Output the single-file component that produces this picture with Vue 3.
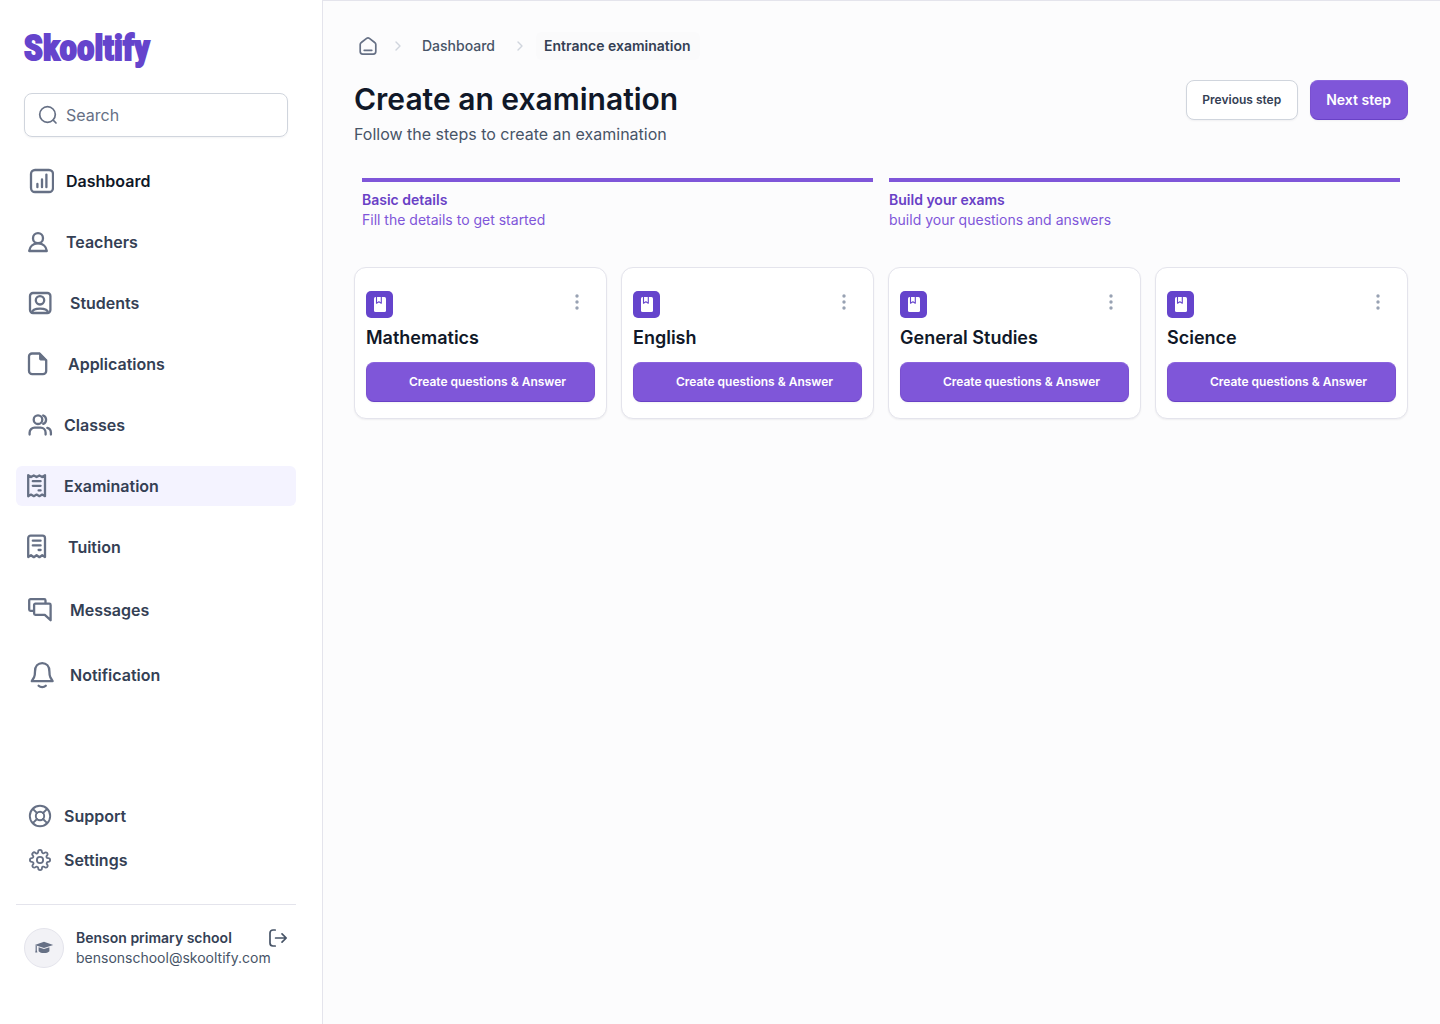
<script setup>
import { ref } from 'vue'

const query = ref('')

const mainNav = [
  { label: 'Dashboard', icon: 'dashboard', gap: 'gap-s', strong: true },
  { label: 'Teachers', icon: 'teachers', gap: 'gap-s' },
  { label: 'Students', icon: 'students', gap: 'gap-l' },
  { label: 'Applications', icon: 'applications', gap: 'gap-m' },
  { label: 'Classes', icon: 'classes', gap: 'gap-xs' },
  { label: 'Examination', icon: 'examination', gap: 'gap-xs', active: true },
  { label: 'Tuition', icon: 'tuition', gap: 'gap-m' }
]

const inboxNav = [
  { label: 'Messages', icon: 'messages', gap: 'gap-l' },
  { label: 'Notification', icon: 'notification', gap: 'gap-l' }
]

const helpNav = [
  { label: 'Support', icon: 'support', gap: 'gap-xs' },
  { label: 'Settings', icon: 'settings', gap: 'gap-xs' }
]

const navGroups = [
  { name: 'Main', cls: 'nav-main', items: mainNav },
  { name: 'Inbox', cls: 'nav-inbox', items: inboxNav },
  { name: 'Help', cls: 'nav-help', items: helpNav }
]

const icons = {
  dashboard:
    '<rect x="5" y="3" width="22" height="22" rx="4"/><path d="M11.4 17v3.2M16 12.4v7.800M20.4 7.600v12.600"/>',
  teachers:
    '<circle cx="12" cy="10.2" r="5"/><path d="M3.2 23c.5-4.4 3.8-7.6 8.8-7.6s8.300 3.200 8.800 7.600z"/>',
  students:
    '<rect x="4" y="4" width="20.400" height="20" rx="3"/><circle cx="14" cy="11.300" r="4.200"/><path d="M6 23.600c.3-2.800 3-4 8-4s7.700 1.200 8 4"/>',
  applications:
    '<path d="M6 3.500h7.600L20.200 10.300V21a3.200 3.200 0 0 1-3.200 3.200H6.200A3.200 3.200 0 0 1 3 21V6.500a3 3 0 0 1 3-3z"/><path d="M13.600 3.800v5.200a1 1 0 0 0 1 1h5.400z" fill="currentColor" stroke-width="1"/>',
  classes:
    '<circle cx="12" cy="8.700" r="4.300"/><path d="M17.200 4.500a4.500 4.500 0 0 1 0 8.400M3.600 23.500v-1.800a5 5 0 0 1 5-5h6a5 5 0 0 1 5 5v1.800M21.300 16.900a5 5 0 0 1 3.600 4.800v1.800"/>',
  examination:
    '<path d="M2.200 3.200 5 5l2.800-1.600L10.600 5l2.800-1.600L16.200 5 19 3.200v21l-2.800-1.600-2.800 1.600-2.800-1.600-2.800 1.600L5 22.600l-2.800 1.600z"/><path d="M6.800 9.200h7.800M6.800 13.800h7.800M12.600 18.400h2"/>',
  tuition:
    '<path d="M2.200 24V5.200a2.500 2.500 0 0 1 2.500-2.500h11.800A2.500 2.500 0 0 1 19 5.200V24l-2.800-1.800-2.800 2-2.800-2-2.800 2-2.800-2z"/><path d="M6.800 7.700h7.800M6.800 12.400h7.800M12.600 17h2"/>',
  messages:
    '<path d="M7.600 14.900H4.500a1.300 1.300 0 0 1-1.300-1.300V4.500a1.300 1.300 0 0 1 1.300-1.300h13.700a1.300 1.300 0 0 1 1.300 1.300v2.600"/><path d="M24.600 24.200V9a1.300 1.300 0 0 0-1.300-1.300H9.400A1.300 1.300 0 0 0 8.100 9v8.600a1.300 1.300 0 0 0 1.300 1.300h9.400z"/>',
  notification:
    '<path d="M5.800 20.200h20.800l-2.200-3.800c-.8-1.500-1-3-1-6 0-5-3-8.300-7.200-8.300s-7.200 3.300-7.200 8.300c0 3-.2 4.500-1 6z"/><path d="M12.600 24.800c1 1 2.200 1.400 3.600 1.400s2.600-.4 3.600-1.400"/>',
  support:
    '<g stroke-width="1.9"><circle cx="14" cy="14" r="10.200"/><circle cx="14" cy="14" r="4.200"/><path d="m6.800 6.800 4.200 4.200m6 6 4.200 4.200m0-14.400L17 11m-6 6-4.200 4.200"/></g>',
  settings:
    '<g transform="translate(3 3) scale(.917)" stroke-width="2"><circle cx="12" cy="12" r="3.400"/><path d="M19.400 15a1.650 1.650 0 0 0 .33 1.820l.06.06a2 2 0 1 1-2.830 2.830l-.06-.06a1.650 1.650 0 0 0-2.800 1.170V21a2 2 0 0 1-4 0v-.09A1.650 1.650 0 0 0 9 19.400a1.650 1.650 0 0 0-1.820.33l-.06.06a2 2 0 1 1-2.830-2.830l.06-.06A1.650 1.650 0 0 0 3.170 14H3a2 2 0 0 1 0-4h.09A1.650 1.650 0 0 0 4.600 9a1.650 1.650 0 0 0-.33-1.820l-.06-.06a2 2 0 1 1 2.830-2.830l.06.06A1.650 1.650 0 0 0 10 3.170V3a2 2 0 0 1 4 0v.09a1.650 1.650 0 0 0 2.800 1.170l.06-.06a2 2 0 1 1 2.830 2.830l-.06.06A1.650 1.650 0 0 0 20.910 10H21a2 2 0 0 1 0 4h-.09a1.650 1.650 0 0 0-1.510 1z"/></g>'
}

const steps = [
  { title: 'Basic details', text: 'Fill the details to get started' },
  { title: 'Build your exams', text: 'build your questions and answers' }
]

const subjects = ['Mathematics', 'English', 'General Studies', 'Science']
</script>

<template>
  <div class="app">
    <aside class="sidebar">
      <a class="logo" href="#">Skooltify</a>

      <label class="search">
        <svg width="20" height="20" viewBox="0 0 20 20" aria-hidden="true">
          <circle cx="9.500" cy="9.500" r="7.800" />
          <path d="m15.200 15.200 2.800 2.800" />
        </svg>
        <input v-model="query" type="search" placeholder="Search" aria-label="Search" />
      </label>

      <nav v-for="group in navGroups" :key="group.name" :class="group.cls" :aria-label="group.name">
        <a
          v-for="item in group.items"
          :key="item.label"
          href="#"
          class="nav-item"
          :class="[item.gap, { active: item.active, strong: item.strong }]"
        >
          <svg class="nav-icon" viewBox="0 0 28 28" aria-hidden="true" v-html="icons[item.icon]"></svg>
          <span>{{ item.label }}</span>
        </a>
      </nav>

      <div class="account">
        <span class="avatar">
          <svg width="20" height="14" viewBox="0 0 20 14" aria-hidden="true">
            <path d="M10 .8 19.200 3.900 10 7 .8 3.900z" />
            <path d="M4.600 6.300 10 8.100l5.400-1.800v3.900c-1.200 1.300-3 1.800-5.400 1.800s-4.200-.5-5.400-1.800z" />
            <path d="M1.600 4.400h1.200v4.800l.6 2.400H1.200l.4-2.400z" />
          </svg>
        </span>
        <span class="who">
          <strong>Benson primary school</strong>
          <span>bensonschool@skooltify.com</span>
        </span>
        <button class="logout" type="button" aria-label="Log out">
          <svg width="20" height="20" viewBox="0 0 20 20" aria-hidden="true">
            <path d="M7.200 2H5A3 3 0 0 0 2 5v10a3 3 0 0 0 3 3h2.200M7.600 10H18M14 5.800l4.200 4.200-4.200 4.200" />
          </svg>
        </button>
      </div>
    </aside>

    <main class="content">
      <nav class="crumbs" aria-label="Breadcrumb">
        <a class="home" href="#" aria-label="Home">
          <svg width="20" height="20" viewBox="0 0 20 20" aria-hidden="true">
            <path d="M6.200 14.300h7.600M2.200 8.600c0-.9.400-1.600 1.100-2.100l5.300-4.200a2.300 2.300 0 0 1 2.800 0l5.300 4.200c.7.500 1.100 1.200 1.100 2.100v7a2.500 2.500 0 0 1-2.500 2.500H4.700a2.500 2.500 0 0 1-2.500-2.500z" />
          </svg>
        </a>
        <svg class="chevron" width="16" height="16" viewBox="0 0 16 16" aria-hidden="true"><path d="m6 4 4 4-4 4" /></svg>
        <a class="crumb" href="#">Dashboard</a>
        <svg class="chevron" width="16" height="16" viewBox="0 0 16 16" aria-hidden="true"><path d="m6 4 4 4-4 4" /></svg>
        <a class="crumb current" href="#" aria-current="page">Entrance examination</a>
      </nav>

      <header class="head">
        <div>
          <h1>Create an examination</h1>
          <p>Follow the steps to create an examination</p>
        </div>
        <div class="actions">
          <button class="btn plain" type="button">Previous step</button>
          <button class="btn primary" type="button">Next step</button>
        </div>
      </header>

      <ol class="steps">
        <li v-for="step in steps" :key="step.title">
          <strong>{{ step.title }}</strong>
          <span>{{ step.text }}</span>
        </li>
      </ol>

      <section class="cards" aria-label="Subjects">
        <article v-for="subject in subjects" :key="subject" class="card">
          <div class="card-top">
            <span class="book">
              <svg width="12" height="15" viewBox="0 0 12 15" aria-hidden="true">
                <rect width="12" height="15" rx="1.500" fill="#fff" stroke="none" />
                <path d="M2.500 0v6.200l2.400-1.500 2.400 1.500V0" fill="#fff" stroke="#6544cc" stroke-width="1.100" />
              </svg>
            </span>
            <button class="more" type="button" :aria-label="subject + ' options'">
              <svg width="4" height="16" viewBox="0 0 4 16" aria-hidden="true">
                <circle cx="2" cy="2" r="1.700" /><circle cx="2" cy="8" r="1.700" /><circle cx="2" cy="14" r="1.700" />
              </svg>
            </button>
          </div>
          <h2>{{ subject }}</h2>
          <button class="btn primary create" type="button">Create questions &amp; Answer</button>
        </article>
      </section>
    </main>
  </div>
</template>

<style>
body {
  margin: 0;
  background: #fcfcfd;
}
</style>

<style scoped>
.app {
  display: flex;
  min-height: 100vh;
  font-family: Inter, 'Liberation Sans', sans-serif;
  color: #344054;
  font-size: 14px;
  line-height: 20px;
}
.app *,
.app {
  box-sizing: border-box;
}
a {
  color: inherit;
  text-decoration: none;
}
button {
  font: inherit;
  cursor: pointer;
}
svg {
  display: block;
  flex: none;
  fill: none;
  stroke: currentColor;
  stroke-linecap: round;
  stroke-linejoin: round;
}

.sidebar {
  flex: none;
  width: 322px;
  padding: 27px 26px 56px 16px;
  display: flex;
  flex-direction: column;
  background: #fff;
}
.logo {
  margin: 0 8px 22px;
  color: #6544cc;
  font-family: 'Roboto Condensed', Roboto, sans-serif;
  font-weight: 700;
  font-size: 35px;
  line-height: 44px;
  -webkit-text-stroke: 2px #6544cc;
}
.search {
  display: flex;
  align-items: center;
  gap: 8px;
  height: 44px;
  margin: 0 8px 24px;
  padding: 0 13px;
  border: 1px solid #d0d5dd;
  border-radius: 8px;
  box-shadow: 0 1px 2px rgba(16, 24, 40, 0.05);
  color: #667085;
}
.search svg {
  stroke-width: 1.7;
}
.search input {
  flex: 1;
  min-width: 0;
  padding: 0;
  border: 0;
  outline: 0;
  background: none;
  font: 400 16px/24px Inter, sans-serif;
  color: #101828;
}
.search input::placeholder {
  color: #667085;
  opacity: 1;
}
.nav-main,
.nav-inbox,
.nav-help {
  display: flex;
  flex-direction: column;
}
.nav-main {
  gap: 21px;
}
.nav-inbox {
  gap: 25px;
  margin: 23px 0;
}
.nav-help {
  gap: 4px;
  margin-top: auto;
}
.nav-item {
  display: flex;
  align-items: center;
  height: 40px;
  padding: 0 10px;
  border-radius: 6px;
  font-size: 16px;
  line-height: 24px;
  font-weight: 600;
}
.nav-icon {
  width: 28px;
  height: 28px;
  color: #667085;
  stroke-width: 2.3;
}
.gap-xs {
  gap: 10px;
}
.gap-s {
  gap: 12px;
}
.gap-m {
  gap: 14px;
}
.gap-l {
  gap: 16px;
}
.strong {
  color: #101828;
}
.active {
  background: #f4f3ff;
}
.account {
  display: flex;
  align-items: flex-start;
  margin-top: 24px;
  padding: 23px 8px 0;
  border-top: 1px solid #e4e4ec;
}
.avatar {
  flex: none;
  display: grid;
  place-items: center;
  width: 40px;
  height: 40px;
  margin-right: 12px;
  border: 1px solid #e4e4ec;
  border-radius: 50%;
  background: #f2f2f6;
}
.avatar svg {
  fill: #667085;
  stroke: none;
}
.who {
  flex: 1;
  width: 0;
  white-space: nowrap;
  color: #475467;
}
.who strong,
.who span {
  display: block;
}
.who strong {
  font-weight: 600;
  color: #344054;
}
.logout {
  padding: 0;
  border: 0;
  background: none;
  color: #475467;
}
.logout svg {
  stroke-width: 1.7;
}

.content {
  flex: 1;
  min-width: 0;
  padding: 31px 32px 32px 31px;
  border-top: 1px solid #e4e4ec;
  border-left: 1px solid #e4e4ec;
  background: #fcfcfd;
}
.crumbs {
  display: flex;
  align-items: center;
  height: 28px;
  margin-bottom: 20px;
}
.home {
  padding: 4px;
  color: #667085;
}
.home svg {
  stroke-width: 1.7;
}
.chevron {
  margin: 0 8px;
  color: #d0d5dd;
  stroke-width: 1.4;
}
.crumb {
  padding: 4px 9px 4px 8px;
  border-radius: 6px;
  font-weight: 500;
  color: #475467;
}
.current {
  font-weight: 600;
  color: #344054;
  background: #fafafb;
}
.head {
  display: flex;
  justify-content: space-between;
  align-items: flex-start;
}
h1 {
  margin: 0 0 4px;
  font-size: 30px;
  line-height: 38px;
  font-weight: 600;
  color: #101828;
}
.head p {
  margin: 0;
  font-size: 16px;
  line-height: 24px;
  color: #475467;
}
.actions {
  display: flex;
  gap: 12px;
}
.btn {
  height: 40px;
  padding: 0 16px 0 15px;
  border-radius: 8px;
  font-size: 14px;
  font-weight: 600;
  white-space: nowrap;
  box-shadow: 0 1px 2px rgba(16, 24, 40, 0.05);
}
.plain {
  border: 1px solid #d0d5dd;
  background: #fff;
  color: #344054;
  font-size: 12px;
}
.primary {
  border: 1px solid #7f56d9;
  border-color: #8a64dd #7a50d0 #6941c6;
  background: #7f56d9;
  color: #fff;
}
.steps {
  display: grid;
  grid-template-columns: 1fr 1fr;
  gap: 16px;
  margin: 32px 8px 37px;
  padding: 0;
  list-style: none;
}
.steps li {
  padding-top: 8px;
  border-top: 4px solid #7f56d9;
}
.steps strong,
.steps span {
  display: block;
}
.steps strong {
  font-weight: 600;
  color: #6941c6;
}
.steps span {
  color: #7f56d9;
}
.cards {
  display: grid;
  grid-template-columns: repeat(4, 1fr);
  gap: 14px;
}
.card {
  padding: 23px 11px 16px;
  border: 1px solid #e4e4ec;
  border-radius: 12px;
  background: #fff;
  box-shadow: 0 1px 2px rgba(16, 24, 40, 0.06);
}
.card-top {
  display: flex;
  justify-content: space-between;
  align-items: flex-start;
  margin-bottom: 6px;
}
.book {
  display: grid;
  place-items: center;
  width: 27px;
  height: 27px;
  border-radius: 5px;
  background: #6544cc;
}
.more {
  padding: 3px 16px;
  border: 0;
  background: none;
  color: #98a2b3;
}
.more svg {
  fill: currentColor;
  stroke: none;
}
h2 {
  margin: 0 0 10px;
  font-size: 18px;
  line-height: 28px;
  font-weight: 600;
  color: #101828;
}
.create {
  display: block;
  width: 100%;
  padding: 0 0 0 14px;
  font-size: 12px;
}
</style>
